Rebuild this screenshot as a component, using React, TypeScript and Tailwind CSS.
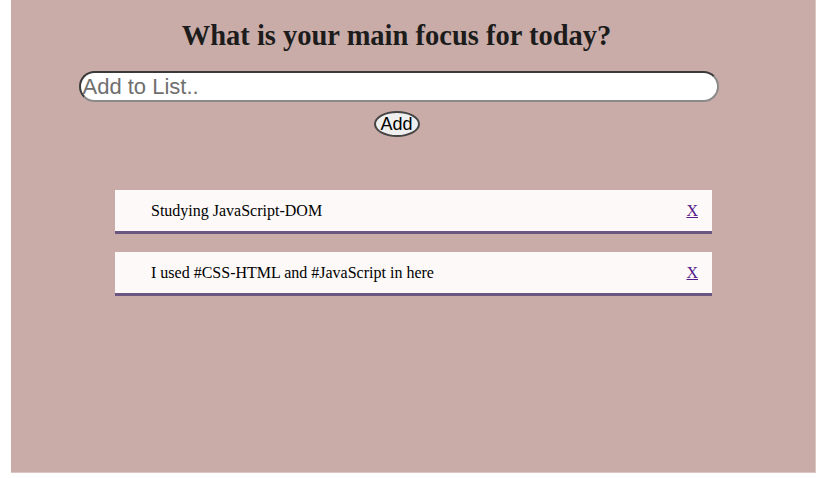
import { useState } from 'react'

const initial = ['Studying JavaScript-DOM', 'I used #CSS-HTML and #JavaScript in here']

export default function App() {
  const [items, setItems] = useState<string[]>(initial)
  const [text, setText] = useState('')

  return (
    <div className="w-[822px] h-[478px] bg-white">
      <div className="ml-[11px] w-[805px] h-[473px] bg-[#c9aca8] border-r border-b border-[#dcc6c3] flex flex-col">
        <div className="w-[775px] flex flex-col items-center">
          <h1 className="mt-[19px] mr-[4px] text-[28.5px] leading-[34px] font-bold text-[#1c1c1c] font-['Liberation_Serif',serif]">
            What is your main focus for today?
          </h1>
          <input
            value={text}
            onChange={e => setText(e.target.value)}
            placeholder="Add to List.."
            className="mt-[18px] w-[640px] h-[31px] rounded-full bg-white border-2 border-[#3a3a3a] border-b-[#8a8a8a] border-r-[#8a8a8a] px-[2px] text-[22px] font-['Liberation_Sans',sans-serif] placeholder:text-[#6f6f6f] outline-none"
          />
          <button
            onClick={() => { if (text.trim()) { setItems([...items, text]); setText('') } }}
            className="mt-[9px] mr-[4px] w-[46px] h-[26px] rounded-[50%] bg-[#efefef] border-2 border-[#444] text-[18px] leading-none text-black font-['Liberation_Sans',sans-serif]"
          >
            Add
          </button>
        </div>
        <ul className="mt-[53px] ml-[104px] w-[597px] flex flex-col gap-[18px]">
          {items.map((item, i) => (
            <li key={i} className="h-[44px] bg-[#fdf9f8] border-b-[3px] border-[#6b5581] flex items-center justify-between pl-[36px] pr-[14px] font-['Liberation_Serif',serif] text-[16px] text-black">
              <span>{item}</span>
              <a href="#" onClick={e => { e.preventDefault(); setItems(items.filter((_, j) => j !== i)) }} className="text-[#551a8b] underline">X</a>
            </li>
          ))}
        </ul>
      </div>
    </div>
  )
}
